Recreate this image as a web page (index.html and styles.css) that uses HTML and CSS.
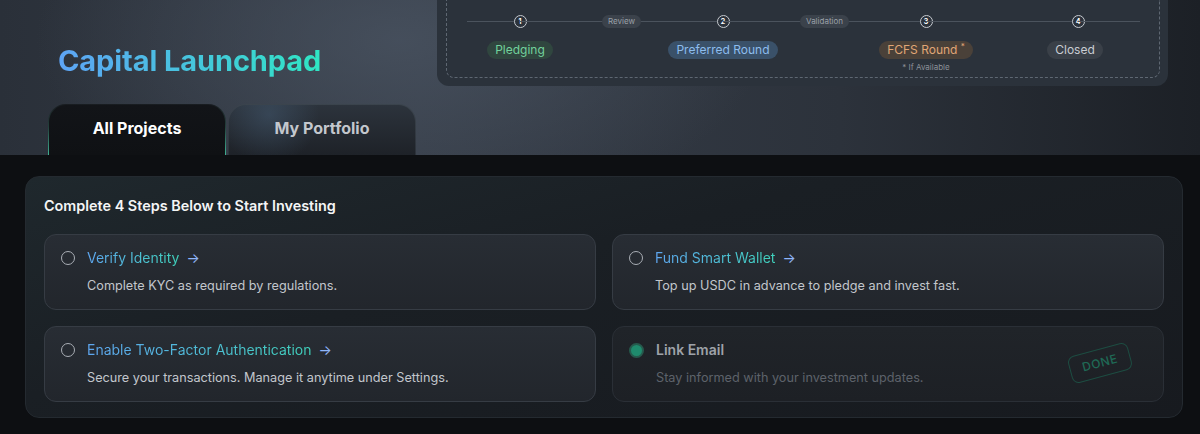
FILE: index.html
```html
<!DOCTYPE html>
<html lang="en">
<head>
    <meta charset="UTF-8">
    <meta name="viewport" content="width=device-width, initial-scale=1.0">
    <title>Capital Launchpad</title>
    <link rel="stylesheet" href="styles.css">
</head>
<body>
    <header class="hero">
        <div class="hero-left">
            <h1 class="brand">Capital Launchpad</h1>
            <nav class="tabs">
                <a class="tab active">All Projects</a>
                <a class="tab">My Portfolio</a>
            </nav>
        </div>

        <div class="stages-card">
            <div class="stages">
                <div class="timeline">
                    <span class="seg lead"></span>
                    <div class="stage">
                        <span class="num">1</span>
                        <span class="label green">Pledging</span>
                    </div>
                    <span class="seg wide"><em>Review</em></span>
                    <div class="stage">
                        <span class="num">2</span>
                        <span class="label blue">Preferred Round</span>
                    </div>
                    <span class="seg wide"><em>Validation</em></span>
                    <div class="stage">
                        <span class="num">3</span>
                        <span class="label orange">FCFS Round <sup>*</sup></span>
                        <span class="note">* If Available</span>
                    </div>
                    <span class="seg short"></span>
                    <div class="stage last">
                        <span class="num">4</span>
                        <span class="label grey">Closed</span>
                    </div>
                    <span class="seg trail"></span>
                </div>
            </div>
        </div>
    </header>

    <main class="content">
        <section class="steps">
            <h2>Complete 4 Steps Below to Start Investing</h2>
            <div class="step-grid">
                <div class="step">
                    <span class="radio"></span>
                    <div>
                        <div class="step-title"><span class="grad">Verify Identity</span> <span class="arrow">&rarr;</span></div>
                        <p>Complete KYC as required by regulations.</p>
                    </div>
                </div>
                <div class="step">
                    <span class="radio"></span>
                    <div>
                        <div class="step-title"><span class="grad">Fund Smart Wallet</span> <span class="arrow">&rarr;</span></div>
                        <p>Top up USDC in advance to pledge and invest fast.</p>
                    </div>
                </div>
                <div class="step">
                    <span class="radio"></span>
                    <div>
                        <div class="step-title"><span class="grad">Enable Two-Factor Authentication</span> <span class="arrow">&rarr;</span></div>
                        <p>Secure your transactions. Manage it anytime under Settings.</p>
                    </div>
                </div>
                <div class="step done">
                    <span class="radio checked"></span>
                    <div>
                        <div class="step-title">Link Email</div>
                        <p>Stay informed with your investment updates.</p>
                    </div>
                    <span class="stamp">DONE</span>
                </div>
            </div>
        </section>
    </main>
</body>
</html>
```

FILE: styles.css
```css
* {
    box-sizing: border-box;
}
body {
    margin: 0;
    font-family: Inter, "Noto Sans", sans-serif;
    background-color: #0d0f12;
    color: #fff;
}
.hero {
    height: 155px;
    display: flex;
    background:
        radial-gradient(ellipse 520px 260px at 400px 40px, rgba(74, 84, 98, 0.75), rgba(74, 84, 98, 0) 70%),
        linear-gradient(90deg, #2a3039 0%, #363d48 35%, #2c323b 70%, #1c2026 100%);
}
.hero-left {
    width: 437px;
    display: flex;
    flex-direction: column;
    padding-left: 48px;
}
.brand {
    margin: 43px 0 0 10px;
    font-size: 29px;
    line-height: 36px;
    font-weight: 700;
    letter-spacing: -0.1px;
    background: linear-gradient(90deg, #5ea4f6, #2fe6c4);
    -webkit-background-clip: text;
    background-clip: text;
    color: transparent;
    width: max-content;
}
.tabs {
    margin-top: auto;
    display: flex;
    gap: 2px;
}
.tab {
    height: 51px;
    display: flex;
    align-items: center;
    justify-content: center;
    font-size: 16px;
    font-weight: 700;
    border-radius: 18px 18px 0 0;
    border: 1.5px solid transparent;
    border-bottom: none;
    padding-bottom: 4px;
}
.tab.active {
    width: 178px;
    color: #fff;
    background:
        linear-gradient(#121418, #0f1114) padding-box,
        linear-gradient(to top, #3fb193, #24403c 55%, #181c20) border-box;
}
.tab:not(.active) {
    width: 188px;
    color: #c3c7cd;
    background:
        radial-gradient(circle 50px at 40px 10px, rgba(80, 110, 140, 0.35), transparent) padding-box,
        linear-gradient(#2c333c, #1e2228) padding-box,
        linear-gradient(#3b444d, #2c323a) border-box;
}

.stages-card {
    width: 731px;
    height: 86px;
    padding: 0 8px 8px 9px;
    background: #2b323b;
    border-radius: 0 0 12px 12px;
}
.stages {
    height: 100%;
    border: 1px dashed #5e6772;
    border-top: none;
    border-radius: 0 0 8px 8px;
    padding: 15px 0 0 20px;
}
.timeline {
    display: flex;
    align-items: flex-start;
}
.seg {
    height: 13px;
    display: flex;
    align-items: center;
    justify-content: center;
    background: linear-gradient(#4b535d, #4b535d) center / 100% 1px no-repeat;
}
.seg.lead { width: 53px; }
.seg.wide { width: 203px; }
.seg.short { width: 152px; }
.seg.trail { width: 62px; }
.seg em {
    font-style: normal;
    font-size: 8px;
    line-height: 13px;
    color: #9aa0a8;
    background: #3b424b;
    border-radius: 7px;
    padding: 0 6px;
}
.stage {
    width: 0;
    display: flex;
    flex-direction: column;
    align-items: center;
}
.stage.last .label {
    margin-left: -6px;
}
.num {
    width: 13px;
    height: 13px;
    flex: none;
    border: 1px solid #c6cad0;
    border-radius: 50%;
    background: #2b323b;
    font-size: 7px;
    font-weight: 700;
    line-height: 11px;
    text-align: center;
}
.label {
    margin-top: 13px;
    height: 18px;
    line-height: 18px;
    padding: 0 8px;
    border-radius: 9px;
    font-size: 12px;
    white-space: nowrap;
}
.label sup {
    font-size: 8px;
    line-height: 0;
}
.green { color: #72d29c; background: #30463f; }
.blue { color: #8dbdee; background: #3a5169; }
.orange { color: #e0a676; background: #4a4139; }
.grey { color: #c9cdd3; background: #3a4048; }
.note {
    margin-top: 3px;
    font-size: 8px;
    color: #8b9199;
    white-space: nowrap;
}

.content {
    padding: 21px 17px 0 25px;
}
.steps {
    border-radius: 14px;
    border: 1px solid #242a30;
    background: linear-gradient(165deg, #1f282d 0%, #1a1f24 40%, #171a1f 100%);
    padding: 18px 18px 15px 18px;
}
.steps h2 {
    margin: 0;
    font-size: 14.4px;
    line-height: 22px;
    font-weight: 600;
    color: #f4f5f6;
}
.step-grid {
    margin-top: 17px;
    display: grid;
    grid-template-columns: 1fr 1fr;
    gap: 16px;
}
.step {
    position: relative;
    display: flex;
    gap: 12px;
    height: 76px;
    padding: 13px 16px;
    border: 1px solid #363c44;
    border-radius: 12px;
    background: linear-gradient(#282d34, #22262c);
}
.radio {
    width: 14px;
    height: 14px;
    margin-top: 3px;
    flex: none;
    border: 1.5px solid #a9aeb5;
    border-radius: 50%;
}
.radio.checked {
    width: 15px;
    height: 15px;
    border: 2px solid #265a4d;
    background: #1f8b6d;
}
.step-title {
    font-size: 14px;
    line-height: 20px;
}
.grad {
    background: linear-gradient(90deg, #5ea6f0, #3fd2bc);
    -webkit-background-clip: text;
    background-clip: text;
    color: transparent;
}
.arrow {
    color: #8fb6fa;
    margin-left: 3px;
}
.step p {
    margin: 8px 0 0;
    font-size: 12.7px;
    line-height: 20px;
    color: #c2c6cc;
}
.step.done {
    background: linear-gradient(#202429, #1d2025);
    border-color: #2a2f36;
}
.step.done .step-title {
    color: #9ea2a9;
    font-weight: 600;
}
.step.done p {
    color: #5d626a;
}
.stamp {
    position: absolute;
    right: 32px;
    top: 22px;
    width: 62px;
    height: 28px;
    line-height: 25px;
    text-align: center;
    border: 1.5px solid #1d4d42;
    border-radius: 7px;
    color: #1f6a56;
    font-size: 12px;
    font-weight: 500;
    letter-spacing: 0.5px;
    transform: rotate(-15deg);
}
```
